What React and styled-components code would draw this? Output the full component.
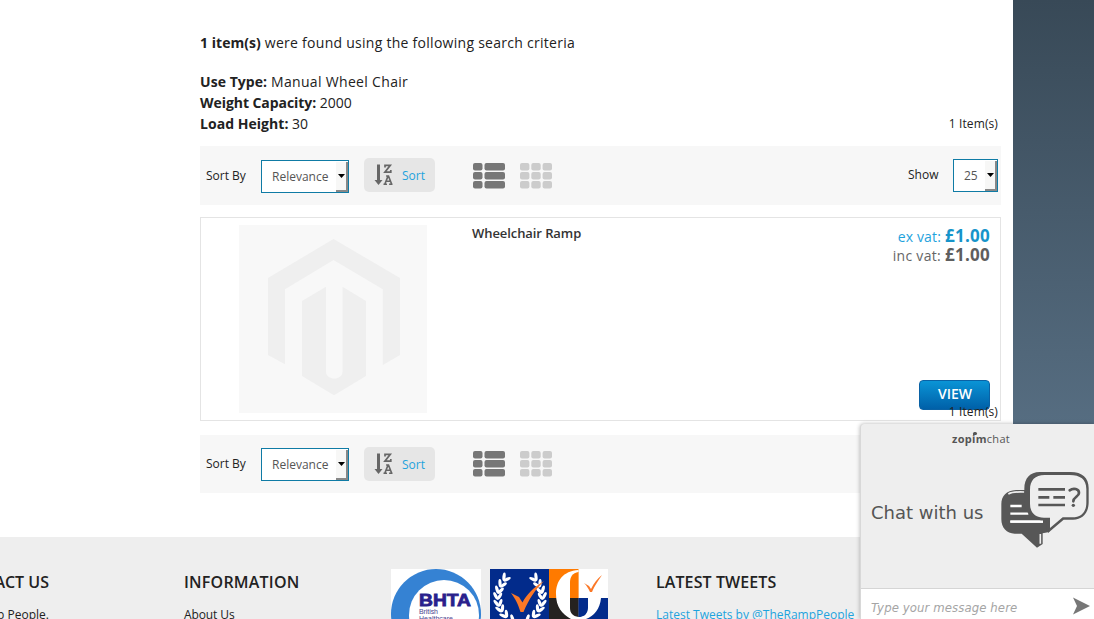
import React from "react";
import styled, { createGlobalStyle, css } from "styled-components";

const GlobalStyle = createGlobalStyle`
  * { box-sizing: border-box; }
  html, body { margin: 0; padding: 0; }
  body { font-family: "Open Sans", "Noto Sans", sans-serif; color: #222; overflow: hidden; }
`;

const Page = styled.div`
  position: relative;
  width: 1094px;
  height: 619px;
  overflow: hidden;
  background: linear-gradient(#384957 0, #566d81 424px);
`;

const Sheet = styled.div`
  width: 1013px;
  height: 619px;
  background: #fff;
`;

const Results = styled.main`
  width: 801px;
  height: 537px;
  margin-left: 200px;
  padding-top: 32px;
`;

const Summary = styled.p`
  margin: 0;
  font-size: 14px;
  line-height: 21px;
  letter-spacing: ${(p) => p.$spacing || "0"};
  white-space: nowrap;
  strong { letter-spacing: ${(p) => p.$strongSpacing || "0"}; }
`;

const Criteria = styled.div`
  display: flex;
  justify-content: space-between;
  align-items: flex-end;
  margin-top: 18px;
  padding-right: 3px;
`;

const Amount = styled.span`
  font-size: 12px;
  line-height: 21px;
  letter-spacing: 0.1px;
  white-space: nowrap;
`;

const Toolbar = styled.div`
  display: flex;
  align-items: flex-start;
  width: 801px;
  height: ${(p) => p.$height};
  margin-top: ${(p) => p.$top};
  padding: 12px 3px 0 6px;
  background: #f7f7f7;
  font-size: 12px;
`;

const Label = styled.span`
  width: ${(p) => p.$width};
  padding-top: ${(p) => p.$drop};
  line-height: 18px;
  white-space: nowrap;
`;

const SelectBox = styled.div`
  display: flex;
  width: ${(p) => p.$width};
  height: 33px;
  margin-top: ${(p) => p.$drop};
  border: 1px solid #0f7ba5;
  background: #fff;
  color: #555;
  line-height: 31px;
`;

const SelectValue = styled.span`
  flex: 1;
  padding-left: 10px;
  white-space: nowrap;
`;

const SelectArrow = styled.span`
  display: flex;
  align-items: center;
  justify-content: center;
  width: 12px;
  margin-top: 1px;
  border-right: 2px solid #888;
  border-bottom: 2px solid #888;
  background: #f7f7f6;
  svg { display: block; flex: none; }
`;

const SortButton = styled.a`
  display: flex;
  align-items: center;
  gap: 9px;
  width: 71px;
  height: 34px;
  margin-left: 15px;
  padding-left: 10px;
  border-radius: 5px;
  background: #e6e6e6;
  color: #1fa3dd;
`;

const Modes = styled.div`
  display: flex;
  gap: 15px;
  margin-left: 38px;
  padding-top: ${(p) => p.$drop};
  svg { display: block; }
`;

const Limiter = styled.div`
  display: flex;
  align-items: flex-start;
  margin-left: auto;
`;

const Card = styled.article`
  display: flex;
  width: 801px;
  height: 204px;
  margin-top: 12px;
  padding: 7px 10px 7px 38px;
  border: 1px solid #e4e4e4;
`;

const ProductName = styled.h2`
  margin: -1px 0 0 45px;
  font-size: 13px;
  line-height: 18px;
  font-weight: 600;
  letter-spacing: -0.08px;
  color: #333;
`;

const Offer = styled.div`
  display: flex;
  flex-direction: column;
  align-items: flex-end;
  margin-left: auto;
  padding-top: 1px;
`;

const Price = styled.div`
  display: flex;
  align-items: baseline;
  gap: 4px;
  height: 19px;
  line-height: 19px;
  font-size: 14px;
  letter-spacing: ${(p) => p.$spacing};
  color: ${(p) => p.$color};
  white-space: nowrap;
  strong { font-size: 17px; letter-spacing: 0.25px; color: ${(p) => p.$strong}; }
`;

const ViewButton = styled.button`
  width: 71px;
  height: 30px;
  margin: auto 0 3px;
  padding: 0 0 2px 1px;
  border: 1px solid #0a62a5;
  border-radius: 4px;
  background: linear-gradient(#0a94d6, #0060a8);
  color: #fff;
  font: 600 14px/26px "Open Sans", sans-serif;
`;

const OverlapRow = styled.div`
  position: relative;
  display: flex;
  justify-content: flex-end;
  height: 0;
  padding-right: 3px;
  ${Amount} { position: relative; top: -20px; }
`;

const Footer = styled.footer`
  display: flex;
  height: 82px;
  padding-top: 32px;
  background: #eee;
  overflow: hidden;
  svg { display: block; }
`;

const Column = styled.section`
  flex: none;
  width: ${(p) => p.$width};
  padding-left: ${(p) => p.$inset || "0"};
  ${(p) =>
    p.$clipped &&
    css`
      display: flex;
      flex-direction: column;
      align-items: flex-end;
    `}
`;

const Heading = styled.h3`
  margin: 0;
  font-size: 16px;
  line-height: 26px;
  font-weight: 600;
  letter-spacing: ${(p) => p.$spacing || "0"};
  white-space: nowrap;
`;

const FooterLine = styled.div`
  margin-top: 10px;
  font-size: 12px;
  line-height: 20px;
  color: ${(p) => p.$color || "#222"};
  letter-spacing: ${(p) => p.$spacing || "0"};
  white-space: nowrap;
`;

const Badges = styled.div`
  display: flex;
  gap: 9px;
  width: 265px;
`;

const ChatPanel = styled.aside`
  position: absolute;
  right: 0;
  bottom: 0;
  width: 234px;
  height: 195px;
  border-left: 1px solid #d8d8d8;
  border-top-left-radius: 4px;
  background: #eee;
  box-shadow: 0 0 4px rgba(0, 0, 0, 0.3);
  color: #555;
  overflow: hidden;
`;

const ChatBrand = styled.div`
  position: relative;
  height: 46px;
  padding: 6px 0 0 91px;
  font-size: 11px;
  line-height: 18px;
  letter-spacing: 0.3px;
  white-space: nowrap;
  &::after {
    content: "";
    position: absolute;
    left: 112px;
    top: 8px;
    width: 4px;
    height: 3px;
    border-radius: 2px 2px 2px 0;
    background: #555;
  }
`;

const ChatBody = styled.div`
  display: flex;
  justify-content: space-between;
  height: 118px;
  padding: 0 4px 0 10px;
`;

const ChatTitle = styled.span`
  padding-top: 31px;
  font: 18px/24px "DejaVu Sans", sans-serif;
  white-space: nowrap;
`;

const ChatInput = styled.div`
  display: flex;
  justify-content: space-between;
  height: 31px;
  padding: 8px 4px 0 10px;
  border-top: 1px solid #d5d5d5;
  background: #fff;
  color: #a5a5a5;
  font: italic 13px/22px "DejaVu Sans Condensed", "DejaVu Sans", sans-serif;
  letter-spacing: 0.1px;
  white-space: nowrap;
`;

const rows = [0, 9, 18];

const ListIcon = () => (
  <svg width="32" height="26" fill="#777">
    {rows.map((y) => (
      <g key={y}>
        <rect x="0" y={y} width="9.5" height="7.5" rx="2" />
        <rect x="11.5" y={y} width="20.5" height="7.5" rx="2" />
      </g>
    ))}
  </svg>
);

const GridIcon = () => (
  <svg width="32" height="26" fill="#ccc">
    {rows.map((y) =>
      [0, 11.3, 22.6].map((x) => <rect key={x + "-" + y} x={x} y={y} width="9.4" height="7.5" rx="2" />)
    )}
  </svg>
);

const IconSvg = styled.svg`
  display: block;
  flex: none;
`;

const SortIcon = () => (
  <IconSvg width="19" height="24" fill="none" stroke="#666">
    <path d="M4.500 1.500v17" strokeWidth="3" />
    <path d="M0.500 17h8l-4 5z" fill="#666" stroke="none" />
    <path d="M11 4.500V2.300h5.300L10.900 9.200h5.900V6.900" strokeWidth="1.7" />
    <path d="M10.800 21.200l3.200-8.100h.5l3.200 8.100M12 18.300h4.400M9.500 21.200h3.500M15.100 21.200h3.400M12.100 13h2.200" strokeWidth="1.6" />
  </IconSvg>
);

const Placeholder = () => (
  <IconSvg width="188" height="188">
    <rect width="188" height="188" fill="#f8f8f8" />
    <g fill="#efefef">
      <path d="M94.5 14L161 53v77l-17.2 10V64.3L94.5 35 46 64.3v75L29 130V53z" />
      <path d="M63 76l24-14.3v85c0 9 16.5 9 16.5 0v-85L127 76v75l-32 19.3L63 151z" />
    </g>
  </IconSvg>
);

const BhtaLogo = () => (
  <svg width="90" height="50">
    <rect width="90" height="50" fill="#fff" />
    <circle cx="45" cy="45" r="45" fill="#3582d3" />
    <circle cx="53" cy="46" r="35" fill="#fff" />
    <text x="28" y="37" fontFamily="Liberation Sans, sans-serif" fontWeight="700" fontSize="17" fill="#2a1f8c" stroke="#2a1f8c" strokeWidth=".8" textLength="52" lengthAdjust="spacingAndGlyphs">BHTA</text>
    <text x="28" y="45" fontFamily="Liberation Sans, sans-serif" fontSize="7" fill="#4a448f" textLength="19">British</text>
    <text x="28" y="52" fontFamily="Liberation Sans, sans-serif" fontSize="7" fill="#4a448f" textLength="34">Healthcare</text>
  </svg>
);

const leaves = [
  [16, 8, 35], [12, 14, 25], [9, 20, 12], [7.5, 26, 0], [8, 33, -10], [10, 39, -25], [14, 45, -38], [20, 50, -50],
];

const LaurelBranch = () => (
  <g fill="#fff">
    {leaves.map(([x, y, r]) => (
      <g key={y} transform={`translate(${x} ${y}) rotate(${r})`}>
        <ellipse cx="-2" cy="0" rx="1.6" ry="4.200" transform="rotate(-28)" />
        <ellipse cx="2.500" cy="0" rx="1.6" ry="4" transform="rotate(30)" />
      </g>
    ))}
  </g>
);

const ApprovalLogo = () => (
  <svg width="118" height="50">
    <rect width="118" height="50" fill="#022b8b" />
    <LaurelBranch />
    <g transform="translate(60 0) scale(-1 1)"><LaurelBranch /></g>
    <path d="M21 24l8 4 3.500 5.500c4-8 11-15 21.500-21.500-9 9-15 18-20.500 31h-3c-2.500-8-5-13-9.500-19z" fill="#fb7827" />
    <rect x="59" width="30" height="29" fill="#ff7a00" />
    <rect x="88.500" width="29.500" height="29" fill="#fff" />
    <rect x="59" y="29" width="30" height="21" fill="#252220" />
    <path d="M88.500 1C73 2 66 12 66 25s6 20 15 25h15c8-3 14-10 15-21H97v12c0 5-4 7-8.500 7z" fill="#fff" />
    <path d="M88.500 3c-6 1-8.500 5-8.500 10v16h8.500z" fill="#ff7a00" />
    <path d="M80 29h8.500v19c-6-1-8.500-4-8.500-9z" fill="#252220" />
    <path d="M88.500 29H98v10c0 5-4 8-9.500 9z" fill="#022b8b" />
    <path d="M94 14l5 3 2 3c3-6 6-10 11-14-4 6-7 10-10 17h-2c-2-4-3-6-6-9z" fill="#fb7827" />
  </svg>
);

const ChatIcon = () => (
  <IconSvg width="90" height="80" viewBox="30 30 270 240">
    <path d="M105 90H78C49 91 34 109 34 132v46c0 26 16 42 40 43h21l46 42 17-11v-32l20-4V150l-55-20z" fill="#575757" />
    <path d="M55 102c12-7 29-7 48-6M151 222v29" fill="none" stroke="#eee" strokeWidth="5" />
    <path d="M61 138h34M61 161h54M61 185h98" stroke="#fff" strokeWidth="7" />
    <path d="M149 36h93c35 0 54 18 54 48v43c0 31-17 51-47 52h-28l-47 40v-39c-43 2-70-17-71-55V86c0-31 17-50 46-50z" fill="#575757" />
    <path d="M164 45h75c32 0 50 13 50 42v41c0 28-15 44-42 44h-29l-38 32v-31h-18c-26 0-42-15-42-42V89c0-28 15-44 44-44z" fill="#eee" />
    <path d="M140 175h39v30l-10 11v-31h-12z" fill="#575757" />
    <path d="M61 185h98" stroke="#fff" strokeWidth="7" />
    <path d="M145 88h80M145 112h33M190 112h35M145 135h80" stroke="#575757" strokeWidth="8" />
    <path d="M239 91c11-8 28-5 28 8 0 11-17 12-17 25" fill="none" stroke="#575757" strokeWidth="8" strokeLinecap="round" />
    <circle cx="250" cy="136" r="5" fill="#575757" />
  </IconSvg>
);

const SendIcon = () => (
  <IconSvg width="18" height="20">
    <path d="M1 0.500l17 8.500L1 17.500l4-8.500z" fill="#777" />
  </IconSvg>
);

const Select = ({ width, drop = "0", children }) => (
  <SelectBox $width={width} $drop={drop}>
    <SelectValue>{children}</SelectValue>
    <SelectArrow>
      <svg width="7" height="4"><path d="M0 0h7L3.500 4z" fill="#000" /></svg>
    </SelectArrow>
  </SelectBox>
);

const ListToolbar = ({ top, height, selectDrop, labelDrop, iconDrop }) => (
  <Toolbar $top={top} $height={height}>
    <Label $width="55px" $drop={labelDrop}>Sort By</Label>
    <Select width="88px" drop={selectDrop}>Relevance</Select>
    <SortButton><SortIcon />Sort</SortButton>
    <Modes $drop={iconDrop}><ListIcon /><GridIcon /></Modes>
    <Limiter>
      <Label $width="45px" $drop="8px">Show</Label>
      <Select width="45px" drop="1px">25</Select>
    </Limiter>
  </Toolbar>
);

export default function App() {
  return (
    <>
      <GlobalStyle />
      <Page>
        <Sheet>
          <Results>
            <Summary $spacing="0.27px" $strongSpacing="0.05px"><strong>1 item(s)</strong> were found using the following search criteria</Summary>
            <Criteria>
              <div>
                <Summary $spacing="0.32px" $strongSpacing="0.05px"><strong>Use Type:</strong> Manual Wheel Chair</Summary>
                <Summary $strongSpacing="-0.06px"><strong>Weight Capacity:</strong> 2000</Summary>
                <Summary $strongSpacing="0.04px"><strong>Load Height:</strong> 30</Summary>
              </div>
              <Amount>1 Item(s)</Amount>
            </Criteria>
            <ListToolbar top="12px" height="59px" selectDrop="2px" labelDrop="9px" iconDrop="5px" />
            <Card>
              <Placeholder />
              <ProductName>Wheelchair Ramp</ProductName>
              <Offer>
                <Price $color="#1fa3dd" $strong="#1694ca" $spacing="0.15px">ex vat: <strong>£1.00</strong></Price>
                <Price $color="#666" $strong="#5e5e5e" $spacing="0.3px">inc vat: <strong>£1.00</strong></Price>
                <ViewButton>VIEW</ViewButton>
              </Offer>
            </Card>
            <OverlapRow><Amount>1 Item(s)</Amount></OverlapRow>
            <ListToolbar top="14px" height="58px" selectDrop="1px" labelDrop="8px" iconDrop="4px" />
          </Results>
          <Footer>
            <Column $width="49px" $clipped>
              <Heading>CONTACT US</Heading>
              <FooterLine>The Ramp People.</FooterLine>
            </Column>
            <Column $width="342px" $inset="135px">
              <Heading $spacing="0.22px">INFORMATION</Heading>
              <FooterLine $spacing="-0.1px">About Us</FooterLine>
            </Column>
            <Badges><BhtaLogo /><ApprovalLogo /></Badges>
            <Column $width="300px">
              <Heading $spacing="0.1px">LATEST TWEETS</Heading>
              <FooterLine $color="#1fa3dd">Latest Tweets by @TheRampPeople</FooterLine>
            </Column>
          </Footer>
        </Sheet>
        <ChatPanel>
          <ChatBrand><strong>zopim</strong>chat</ChatBrand>
          <ChatBody>
            <ChatTitle>Chat with us</ChatTitle>
            <ChatIcon />
          </ChatBody>
          <ChatInput>Type your message here<SendIcon /></ChatInput>
        </ChatPanel>
      </Page>
    </>
  );
}
